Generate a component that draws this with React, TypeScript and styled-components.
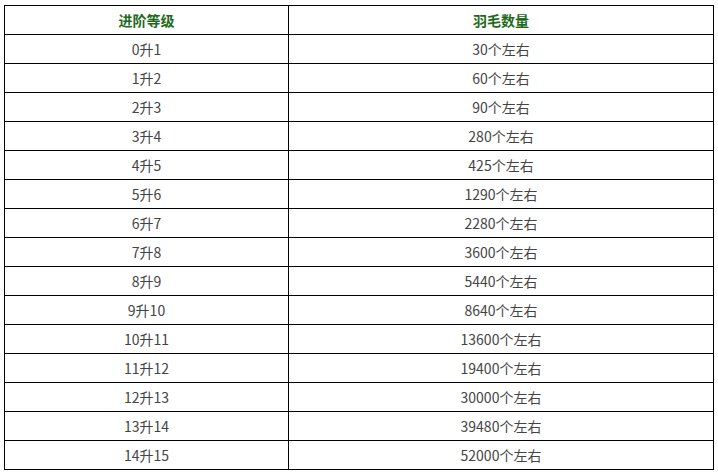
import React from "react";
import styled, { createGlobalStyle } from "styled-components";

const Global = createGlobalStyle`
  html, body { margin: 0; padding: 0; background: #ffffff; }
  body { font-family: "Noto Sans CJK SC", "Noto Sans", sans-serif; }
`;

const Wrap = styled.div`
  padding: 5px 0 0 4px;
`;

const Table = styled.table`
  border-collapse: collapse;
  width: 710px;
  table-layout: fixed;
  border: 1px solid #000;
`;

const Col1 = styled.col`
  width: 284px;
`;

const HeadCell = styled.th`
  height: 28px;
  padding: 0;
  border: 1px solid #000;
  text-align: center;
  vertical-align: middle;
  font-size: 14px;
  font-weight: bold;
  color: #1e6a1c;
  line-height: 28px;
`;

const Cell = styled.td`
  height: 28px;
  padding: 0;
  border: 1px solid #000;
  text-align: center;
  vertical-align: middle;
  font-size: 14px;
  color: #444;
  line-height: 28px;
`;

const rows: [string, string][] = [
  ["0升1", "30个左右"],
  ["1升2", "60个左右"],
  ["2升3", "90个左右"],
  ["3升4", "280个左右"],
  ["4升5", "425个左右"],
  ["5升6", "1290个左右"],
  ["6升7", "2280个左右"],
  ["7升8", "3600个左右"],
  ["8升9", "5440个左右"],
  ["9升10", "8640个左右"],
  ["10升11", "13600个左右"],
  ["11升12", "19400个左右"],
  ["12升13", "30000个左右"],
  ["13升14", "39480个左右"],
  ["14升15", "52000个左右"],
];

export default function App() {
  return (
    <>
      <Global />
      <Wrap>
        <Table>
          <colgroup>
            <Col1 />
            <col />
          </colgroup>
          <thead>
            <tr>
              <HeadCell>进阶等级</HeadCell>
              <HeadCell>羽毛数量</HeadCell>
            </tr>
          </thead>
          <tbody>
            {rows.map(([a, b]) => (
              <tr key={a}>
                <Cell>{a}</Cell>
                <Cell>{b}</Cell>
              </tr>
            ))}
          </tbody>
        </Table>
      </Wrap>
    </>
  );
}
